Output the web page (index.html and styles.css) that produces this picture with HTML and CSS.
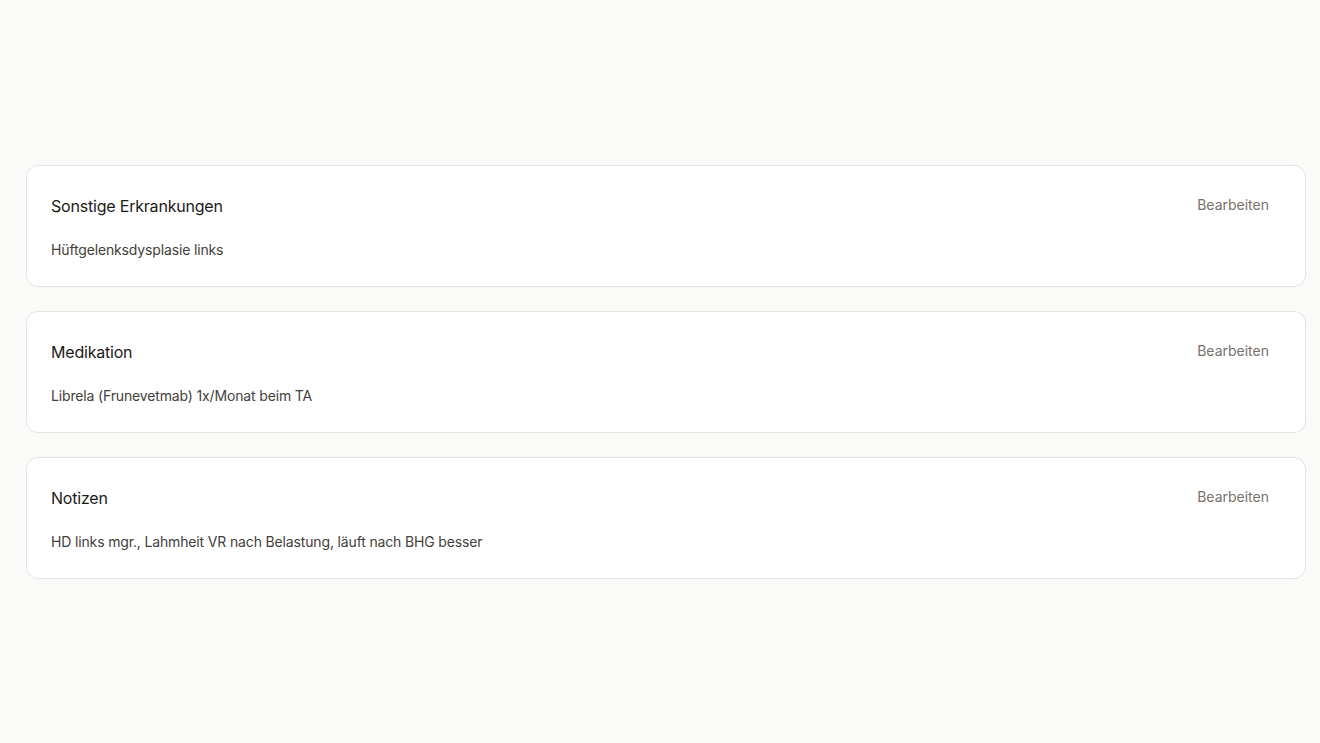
FILE: index.html
```html
<!DOCTYPE html>
<html lang="de">
<head>
    <meta charset="UTF-8">
    <meta name="viewport" content="width=device-width, initial-scale=1.0">
    <title>Gesundheit</title>
    <link rel="stylesheet" href="styles.css">
</head>
<body>
    <div class="container">
        <div class="card">
            <div class="card-header">
                <h2 class="card-title">Sonstige Erkrankungen</h2>
                <button class="edit-btn">Bearbeiten</button>
            </div>
            <p class="card-text">Hüftgelenksdysplasie links</p>
        </div>

        <div class="card">
            <div class="card-header">
                <h2 class="card-title">Medikation</h2>
                <button class="edit-btn">Bearbeiten</button>
            </div>
            <p class="card-text">Librela (Frunevetmab) 1x/Monat beim TA</p>
        </div>

        <div class="card">
            <div class="card-header">
                <h2 class="card-title">Notizen</h2>
                <button class="edit-btn">Bearbeiten</button>
            </div>
            <p class="card-text">HD links mgr., Lahmheit VR nach Belastung, läuft nach BHG besser</p>
        </div>
    </div>
</body>
</html>
```

FILE: styles.css
```css
body {
    margin: 0;
    font-family: Inter, "Noto Sans", sans-serif;
    background-color: #fafaf9;
    color: #1c1917;
}
.container {
    padding: 165px 14px 40px 26px;
    display: flex;
    flex-direction: column;
    gap: 24px;
}
.card {
    background-color: white;
    border: 1px solid #e5e3e1;
    border-radius: 12px;
    padding: 24px 24px 25px 24px;
}
.card-header {
    display: flex;
    justify-content: space-between;
    align-items: center;
    height: 32px;
}
.card-title {
    margin: 0;
    font-size: 16px;
    font-weight: 400;
    letter-spacing: -0.2px;
    color: #1c1917;
}
.edit-btn {
    background: none;
    border: none;
    font-family: inherit;
    font-size: 14px;
    color: #78716c;
    padding: 4px 12px 8px 12px;
    cursor: pointer;
}
.card-text {
    margin: 17px 0 0 0;
    font-size: 14px;
    line-height: 22px;
    letter-spacing: -0.15px;
    color: #44403c;
}
```
